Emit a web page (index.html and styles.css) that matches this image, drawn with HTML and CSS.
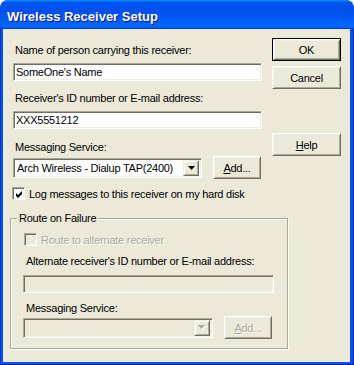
FILE: index.html
```html
<!DOCTYPE html>
<html lang="en">
<head>
  <meta charset="UTF-8" />
  <title>Wireless Receiver Setup</title>
  <link rel="stylesheet" href="styles.css">
</head>
<body>

<div class="window">
  <!-- Title bar -->
  <div class="titlebar">
    <span class="title">Wireless Receiver Setup</span>
  </div>

  <div class="frame">
    <div class="client">

      <div class="top">
        <div class="fields">
          <div class="field-label">Name of person carrying this receiver:</div>
          <input class="edit" type="text" value="SomeOne's Name">

          <div class="field-label">Receiver's ID number or E-mail address:</div>
          <input class="edit" type="text" value="XXX5551212">

          <div class="field-label combo-label">Messaging Service:</div>
          <div class="combo-row">
            <div class="combo">
              <span class="combo-text">Arch Wireless - Dialup TAP(2400)</span>
              <span class="combo-arrow">
                <svg width="7" height="4" viewBox="0 0 7 4"><polygon points="0,0 7,0 3.5,4" fill="#000"/></svg>
              </span>
            </div>
            <button class="btn btn-add"><u>A</u>dd...</button>
          </div>

          <div class="check-row">
            <span class="check">
              <svg width="9" height="9" viewBox="0 0 9 9"><polygon points="1,3 3,5 7,1 7,4 3,8 1,6" fill="#000"/></svg>
            </span>
            <span>Log messages to this receiver on my hard disk</span>
          </div>
        </div>

        <div class="buttons">
          <button class="btn btn-default">OK</button>
          <button class="btn btn-cancel">Cancel</button>
          <button class="btn btn-help"><u>H</u>elp</button>
        </div>
      </div>

      <!-- Route on Failure -->
      <fieldset class="group">
        <legend>Route on Failure</legend>

        <div class="check-row group-check disabled">
          <span class="check check-disabled"></span>
          <span>Route to alternate receiver</span>
        </div>

        <div class="field-label group-label">Alternate receiver's ID number or E-mail address:</div>
        <input class="edit edit-wide" type="text" value="" disabled>

        <div class="field-label group-label">Messaging Service:</div>
        <div class="combo-row group-row">
          <div class="combo combo-disabled">
            <span class="combo-text"></span>
            <span class="combo-arrow">
              <svg width="8" height="5" viewBox="0 0 8 5"><polygon points="1,1 8,1 4.5,5" fill="#fff"/><polygon points="0,0 7,0 3.5,4" fill="#ACA899"/></svg>
            </span>
          </div>
          <button class="btn btn-add" disabled><u>A</u>dd...</button>
        </div>
      </fieldset>

    </div>
  </div>
</div>

</body>
</html>
```

FILE: styles.css
```css
body {
  margin: 0;
  padding: 0;
  background: #fff;
  font-family: "Liberation Sans", Arial, sans-serif;
  font-size: 11px;
  letter-spacing: -0.25px;
  color: #000;
}

.window {
  width: 354px;
  height: 365px;
  display: flex;
  flex-direction: column;
  background: #0055EA;
  border-radius: 8px 8px 0 0;
  overflow: hidden;
}

.titlebar {
  height: 29px;
  flex: none;
  box-sizing: border-box;
  padding: 3px 0 0 7px;
  display: flex;
  align-items: center;
  background: linear-gradient(180deg, #0997ff, #0053ee 8%, #0050ee 40%, #06f 88%, #06f 93%, #005bff 95%, #003dd7 96%, #003dd7);
  border-radius: 8px 8px 0 0;
}

.title {
  color: #fff;
  font-weight: bold;
  font-size: 13px;
  letter-spacing: 0;
  text-shadow: 1px 1px #0f1089;
  white-space: nowrap;
}

.frame {
  flex: 1;
  display: flex;
  padding: 0 4px 3px 3px;
  background: #0055EA;
  box-shadow: inset 1px 0 #0831D9, inset -1px -1px #001EA0;
}

.client {
  flex: 1;
  background: #ECE9D8;
  padding: 9px 9px 0 7px;
}

.top {
  display: flex;
}

.fields {
  width: 249px;
  margin-left: 3px;
}

.buttons {
  width: 69px;
  margin-left: 10px;
  display: flex;
  flex-direction: column;
}

.field-label {
  height: 13px;
  line-height: 13px;
  padding-left: 2px;
  margin-top: 11px;
  white-space: nowrap;
}

.fields .field-label:first-child {
  margin-top: 6px;
}

.combo-label {
  margin-top: 12px;
}

/* sunken 3D edit */
.edit {
  display: block;
  box-sizing: border-box;
  width: 249px;
  height: 18px;
  margin: 6px 0 0;
  padding: 0 2px;
  font-family: inherit;
  font-size: 11px;
  letter-spacing: inherit;
  color: #000;
  background: #fff;
  border: 1px solid;
  border-color: #ACA899 #fff #fff #ACA899;
  box-shadow: inset 1px 1px #716F64, inset -1px -1px #F1EFE2;
  outline: none;
}

.edit:disabled {
  background: #ECE9D8;
}

.edit-wide {
  width: 251px;
}

.combo-row {
  display: flex;
  align-items: center;
  gap: 11px;
  margin-top: 2px;
}

.combo {
  box-sizing: border-box;
  width: 189px;
  height: 20px;
  display: flex;
  align-items: center;
  padding: 2px 2px 2px 3px;
  background: #fff;
  border: 1px solid;
  border-color: #ACA899 #fff #fff #ACA899;
  box-shadow: inset 1px 1px #716F64, inset -1px -1px #F1EFE2;
}

.combo-disabled {
  width: 190px;
  background: #ECE9D8;
}

.combo-text {
  flex: 1;
  white-space: nowrap;
  overflow: hidden;
}

.combo-arrow {
  box-sizing: border-box;
  width: 16px;
  height: 16px;
  display: flex;
  align-items: center;
  justify-content: center;
  background: #ECE9D8;
  border: 1px solid;
  border-color: #F1EFE2 #716F64 #716F64 #F1EFE2;
  box-shadow: inset 1px 1px #fff, inset -1px -1px #ACA899;
}

/* raised 3D button */
.btn {
  box-sizing: border-box;
  width: 69px;
  height: 23px;
  margin: 0;
  padding: 0;
  font-family: inherit;
  font-size: 11px;
  letter-spacing: inherit;
  color: #000;
  background: #ECE9D8;
  border: 1px solid;
  border-color: #fff #716F64 #716F64 #fff;
  box-shadow: inset 1px 1px #F1EFE2, inset -1px -1px #ACA899;
}

.buttons .btn-cancel {
  margin-top: 5px;
}

.buttons .btn-help {
  margin-top: 44px;
}

.btn-default {
  border: 1px solid #000;
  box-shadow: inset 1px 1px #fff, inset -1px -1px #716F64, inset 2px 2px #F1EFE2, inset -2px -2px #ACA899;
}

.btn-add {
  width: 48px;
  flex: none;
}

.btn:disabled {
  color: #ACA899;
  text-shadow: 1px 1px #fff;
}

.check-row {
  display: flex;
  align-items: center;
  height: 13px;
  margin-top: 8px;
  margin-left: -1px;
  white-space: nowrap;
}

.check {
  box-sizing: border-box;
  width: 13px;
  height: 13px;
  margin-right: 4px;
  display: flex;
  align-items: center;
  justify-content: center;
  background: #fff;
  border: 1px solid;
  border-color: #ACA899 #fff #fff #ACA899;
  box-shadow: inset 1px 1px #716F64, inset -1px -1px #F1EFE2;
}

.check svg {
  margin: 1px 0 0 1px;
}

.check-disabled {
  background: #ECE9D8;
}

.disabled {
  color: #ACA899;
  text-shadow: 1px 1px #fff;
}

/* etched group box */
.group {
  box-sizing: border-box;
  width: 278px;
  margin: 12px 0 0;
  padding: 0 12px 9px 12px;
  min-width: 0;
  border: 1px solid #ACA899;
  box-shadow: 1px 1px 0 #fff, inset 1px 1px #fff;
}

.group legend {
  padding: 0 2px;
  margin-left: -6px;
  line-height: 13px;
  background: #ECE9D8;
}

.group-check {
  margin-top: 8px;
  margin-left: 1px;
}

.group-label {
  margin-top: 9px;
  padding-left: 3px;
}

.group .edit {
  margin-top: 7px;
}

.group .field-label + .group-row {
  margin-top: 1px;
}
```
